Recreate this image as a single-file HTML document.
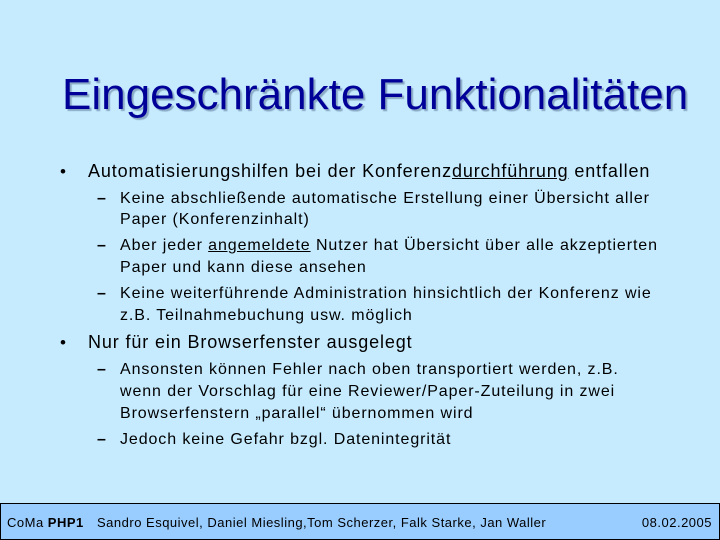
<!DOCTYPE html>
<html><head><meta charset="utf-8"><style>
body{margin:0;width:720px;height:540px;background:#c6ebff;position:relative;overflow:hidden;font-family:"Liberation Sans",sans-serif;}
.t{position:absolute;left:62px;top:70px;font-size:44px;color:#000099;text-shadow:2px 2px 1px #8aa9c4;white-space:nowrap;}
.l{position:absolute;white-space:nowrap;color:#000}
.a{font-size:18px;left:88px;letter-spacing:0.87px}
.b{font-size:16px;left:120px;letter-spacing:0.9px}
.bu{font-size:17px;left:60px}
.d{font-size:16px;left:97px;font-weight:bold}
u{text-decoration:underline}
.f{position:absolute;left:0;top:503px;width:718px;height:35px;background:#99ccff;border:1px solid #000;font-size:13px;letter-spacing:0.5px}
</style></head><body>
<div class="t">Eingeschränkte Funktionalitäten</div>
<div class="l bu" style="top:162px">•</div>
<div class="l a" style="top:161px">Automatisierungshilfen bei der Konferenz<u>durchführung</u> entfallen</div>
<div class="l d" style="top:190px">–</div>
<div class="l b" style="top:190px">Keine abschließende automatische Erstellung einer Übersicht aller</div>
<div class="l b" style="top:211px">Paper (Konferenzinhalt)</div>
<div class="l d" style="top:237px">–</div>
<div class="l b" style="top:237px">Aber jeder <u>angemeldete</u> Nutzer hat Übersicht über alle akzeptierten</div>
<div class="l b" style="top:259px">Paper und kann diese ansehen</div>
<div class="l d" style="top:285px">–</div>
<div class="l b" style="top:285px">Keine weiterführende Administration hinsichtlich der Konferenz wie</div>
<div class="l b" style="top:307px">z.B. Teilnahmebuchung usw. möglich</div>
<div class="l bu" style="top:333px">•</div>
<div class="l a" style="top:332px">Nur für ein Browserfenster ausgelegt</div>
<div class="l d" style="top:361px">–</div>
<div class="l b" style="top:361px">Ansonsten können Fehler nach oben transportiert werden, z.B.</div>
<div class="l b" style="top:383px">wenn der Vorschlag für eine Reviewer/Paper-Zuteilung in zwei</div>
<div class="l b" style="top:405px">Browserfenstern „parallel“ übernommen wird</div>
<div class="l d" style="top:431px">–</div>
<div class="l b" style="top:431px">Jedoch keine Gefahr bzgl. Datenintegrität</div>
<div class="f">
<span class="l" style="left:6px;top:11px">CoMa <b>PHP1</b></span>
<span class="l" style="left:96px;top:11px">Sandro Esquivel, Daniel Miesling,Tom Scherzer, Falk Starke, Jan Waller</span>
<span class="l" style="right:7px;top:11px">08.02.2005</span>
</div>
</body></html>
